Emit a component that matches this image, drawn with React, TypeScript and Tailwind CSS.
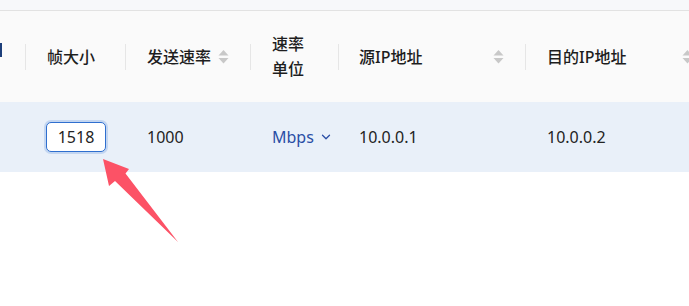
import React from "react";
import { ChevronDown } from "lucide-react";

const font = { fontFamily: '"Noto Sans", "Noto Sans CJK SC", sans-serif' };

function SortIcon() {
  return (
    <svg width="11" height="16" viewBox="0 0 11 16" className="shrink-0">
      <polygon points="5.5,1 10.5,6.5 0.5,6.5" fill="#c8c8c8" />
      <polygon points="0.5,9 10.5,9 5.5,14.5" fill="#c8c8c8" />
    </svg>
  );
}

function Sep() {
  return <div className="w-px h-[26px] bg-[#e6e6e6] shrink-0" />;
}

export default function App() {
  return (
    <div
      className="relative w-[689px] h-[306px] bg-white overflow-hidden text-[16px] leading-none"
      style={font}
    >
      <div className="h-[11px] bg-[#f7f8fa] border-b border-[#e2e2e2]" />
      {/* header */}
      <div className="h-[91px] bg-[#fafafa] flex items-center text-[#1e1e1e] font-medium">
        <div className="w-[25px] shrink-0 h-full flex items-center">
          <div className="w-[2px] h-[14px] bg-[#1d3f7a] -mt-[14px]" />
        </div>
        <Sep />
        <div className="w-[99px] shrink-0 pl-[21px]">帧大小</div>
        <Sep />
        <div className="w-[124px] shrink-0 pl-[21px] flex items-center gap-[7px]">
          <span>发送速率</span>
          <SortIcon />
        </div>
        <Sep />
        <div className="w-[87px] shrink-0 pl-[21px] leading-[25px]">
          <div>速率</div>
          <div>单位</div>
        </div>
        <Sep />
        <div className="w-[186px] shrink-0 pl-[20px] pr-[21px] flex items-center justify-between">
          <span>源IP地址</span>
          <SortIcon />
        </div>
        <Sep />
        <div className="w-[188px] shrink-0 pl-[21px] pr-[21px] flex items-center justify-between">
          <span>目的IP地址</span>
          <SortIcon />
        </div>
      </div>
      {/* row */}
      <div className="h-[70px] bg-[#e9f0f9] flex items-center text-[#232323]">
        <div className="w-[25px] shrink-0" />
        <div className="w-px shrink-0" />
        <div className="w-[99px] shrink-0 pl-[20px]">
          <div className="w-[60px] h-[30px] rounded-[5px] border border-[#2f6fcf] bg-white shadow-[0_0_0_2px_#c3d6f1] flex items-center justify-center">
            1518
          </div>
        </div>
        <div className="w-px shrink-0" />
        <div className="w-[124px] shrink-0 pl-[21px]">1000</div>
        <div className="w-px shrink-0" />
        <div className="w-[87px] shrink-0 pl-[21px] flex items-center gap-[5px] text-[#2a4ea5]">
          <span>Mbps</span>
          <ChevronDown size={14} strokeWidth={2.2} />
        </div>
        <div className="w-px shrink-0" />
        <div className="w-[186px] shrink-0 pl-[20px]">10.0.0.1</div>
        <div className="w-px shrink-0" />
        <div className="w-[188px] shrink-0 pl-[21px]">10.0.0.2</div>
      </div>
      {/* annotation arrow */}
      <svg
        className="absolute left-0 top-0 pointer-events-none"
        width="689"
        height="306"
        viewBox="0 0 689 306"
      >
        <polygon
          points="103,159 129,169 125.5,173.5 178,242 115,181 109,186"
          fill="#fc5266"
        />
      </svg>
    </div>
  );
}
